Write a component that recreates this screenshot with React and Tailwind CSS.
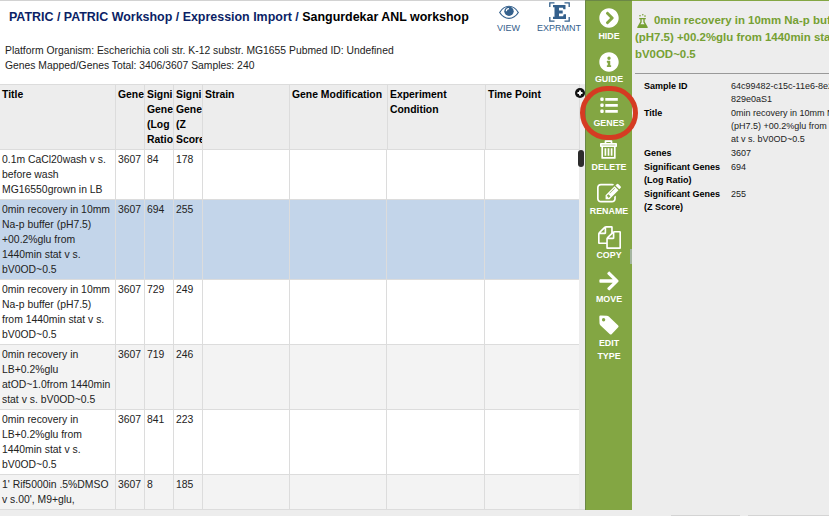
import React from "react";
import { FaChevronCircleRight, FaInfoCircle, FaArrowRight } from "react-icons/fa";

const columns = [
  ["Title", "w-[116px]"],
  ["Gene", "w-[29px]"],
  ["Signi Gene (Log Ratio", "w-[29px]"],
  ["Signi Gene (Z Score", "w-[29px]"],
  ["Strain", "w-[87px]"],
  ["Gene Modification", "w-[98px]"],
  ["Experiment Condition", "w-[98px]"],
  ["Time Point", "flex-1"],
];

const rows = [
  { lines: ["0.1m CaCl20wash v s.", "before wash", "MG16550grown in LB"], values: ["3607", "84", "178"], bg: "bg-white" },
  { lines: ["0min recovery in 10mm", "Na-p buffer (pH7.5)", "+00.2%glu from", "1440min stat v s.", "bV0OD~0.5"], values: ["3607", "694", "255"], bg: "bg-[#c3d5ea]" },
  { lines: ["0min recovery in 10mm", "Na-p buffer (pH7.5)", "from 1440min stat v s.", "bV0OD~0.5"], values: ["3607", "729", "249"], bg: "bg-white" },
  { lines: ["0min recovery in", "LB+0.2%glu", "atOD~1.0from 1440min", "stat v s. bV0OD~0.5"], values: ["3607", "719", "246"], bg: "bg-[#f3f3f3]" },
  { lines: ["0min recovery in", "LB+0.2%glu from", "1440min stat v s.", "bV0OD~0.5"], values: ["3607", "841", "223"], bg: "bg-white" },
  { lines: ["1' Rif5000in .5%DMSO", "v s.00', M9+glu,"], values: ["3607", "8", "185"], bg: "bg-[#f3f3f3]" },
];

const emptyCells = ["w-[87px]", "w-[97px]", "w-[98px]", "flex-1"];

const details = [
  { label: ["Sample ID"], value: ["64c99482-c15c-11e6-8e2a-", "829e0aS1"] },
  { label: ["Title"], value: ["0min recovery in 10mm Na-p", "(pH7.5) +00.2%glu from 1440", "at v s. bV0OD~0.5"] },
  { label: ["Genes"], value: ["3607"] },
  { label: ["Significant Genes", "(Log Ratio)"], value: ["694"] },
  { label: ["Significant Genes", "(Z Score)"], value: ["255"] },
];

function Lines({ items }) {
  return items.map((t) => (
    <div key={t} className="whitespace-nowrap">{t}</div>
  ));
}

function ListIcon() {
  return (
    <svg className="h-[17px] w-[18px]" viewBox="0 0 18 17" fill="currentColor">
      <rect x="0.3" y="0.6" width="3.4" height="3.4" rx="1.2" />
      <rect x="0.3" y="6.6" width="3.4" height="3.4" rx="1.2" />
      <rect x="0.3" y="12.6" width="3.4" height="3.4" rx="1.2" />
      <path d="M5.300 1h12.500v2.800H5.300zM5.300 7h12.500v2.800H5.300zM5.300 13h12.500v2.800H5.300z" />
    </svg>
  );
}

function TrashIcon() {
  return (
    <svg className="h-[19px] w-[17px]" viewBox="0 0 17 19" fill="none" stroke="currentColor" strokeWidth="1.7" strokeLinejoin="round">
      <path d="M5.500 3V1.200h6V3M.8 6.200V3.900h15.400v2.300zM2.200 6.500v11.400h12.600V6.500M5.400 8.300v7.400M8.500 8.300v7.400M11.600 8.300v7.400" />
    </svg>
  );
}

function EditIcon() {
  return (
    <svg className="h-[24px] w-[24px]" viewBox="0 0 1792 1792" fill="currentColor">
      <path d="M888 1184l116-116-152-152-116 116v56h96v96h56zm440-720q-16-16-33 1l-350 350q-17 17-1 33t33-1l350-350q17-17 1-33zm80 594v190q0 119-84.5 203.5t-203.5 84.5h-832q-119 0-203.5-84.5t-84.5-203.5v-832q0-119 84.5-203.5t203.5-84.5h832q63 0 117 25 15 7 18 23 3 17-9 29l-49 49q-14 14-32 8-23-6-45-6h-832q-66 0-113 47t-47 113v832q0 66 47 113t113 47h832q66 0 113-47t47-113v-126q0-13 9-22l64-64q15-15 35-7t20 29zm-96-738l288 288-672 672h-288v-288zm444 132l-92 92-288-288 92-92q28-28 68-28t68 28l152 152q28 28 28 68t-28 68z" />
    </svg>
  );
}

function CopyIcon() {
  return (
    <svg className="h-[23px] w-[23px]" viewBox="0 0 1792 1792" fill="currentColor">
      <path d="M1696 384q40 0 68 28t28 68v1216q0 40-28 68t-68 28h-960q-40 0-68-28t-28-68v-288h-544q-40 0-68-28t-28-68v-672q0-40 20-88t48-76l408-408q28-28 76-48t88-20h416q40 0 68 28t28 68v328q68-40 128-40h416zm-544 213l-299 299h299v-299zm-640-384l-299 299h299v-299zm196 647l316-316v-416h-384v416q0 40-28 68t-68 28h-416v640h512v-256q0-40 20-88t48-76zm956 804v-1152h-384v416q0 40-28 68t-68 28h-416v640h896z" />
    </svg>
  );
}

function TagIcon() {
  return (
    <svg className="h-[20px] w-[20px]" viewBox="0 0 20 20" fill="currentColor" fillRule="evenodd">
      <path d="M1.600.4L7.800.8Q9 .9 9.800 1.600L19.200 10.600Q20 11.500 19.200 12.300L12.600 19.200Q11.800 20 10.900 19.200L1.300 10.200Q.6 9.400.5 8.300L.3 1.700Q.3.4 1.600.4zM4.600 3a1.700 1.700 0 1 0 0 3.400 1.700 1.700 0 0 0 0-3.400z" />
    </svg>
  );
}

function EyeIcon() {
  return (
    <svg className="h-[15px] w-[20px]" viewBox="0 0 20 15" fill="none" stroke="currentColor">
      <path d="M.7 7.500C5.500-.8 14.500-.8 19.300 7.500 14.500 15.200 5.500 15.200.7 7.500z" strokeWidth="1.2" />
      <circle cx="10" cy="6.300" r="4.700" fill="currentColor" stroke="none" />
      <path d="M7.300 6.200A2.700 2.700 0 0 1 10 3.600" stroke="white" strokeWidth="1.1" />
    </svg>
  );
}

function ExperimentIcon() {
  return (
    <svg className="h-[20px] w-[21px]" viewBox="0 0 21 20" fill="none" stroke="currentColor">
      <path d="M5.500.8H.8v4.200M15.500.8h4.700v4.200M.8 15v4.200h4.700M20.200 15v4.200h-4.700" strokeWidth="1.3" />
      <path d="M4 3h12.500v4.300h-2.100l-.5-1.500H10v2.700h3.700v2.900H10v2.800h4.100l.6-1.900h2.300V17H4v-2.300h1.500V5.300H4z" fill="currentColor" stroke="none" />
    </svg>
  );
}

function FlaskIcon() {
  return (
    <svg className="h-[14px] w-[11px] shrink-0" viewBox="0 0 11 14" fill="currentColor">
      <path d="M2.200 4h6.600v1.300H7.700v2.500l3 5.100c.2.600 0 1-.7 1H1c-.7 0-.9-.4-.7-1l3-5.100V5.300H2.200zM4.700 5.300v2.900L3.400 10.300h4.200L6.300 8.200V5.300z" fillRule="evenodd" />
      <circle cx="3" cy="1.700" r=".8" />
      <circle cx="5.800" cy=".8" r=".8" />
      <circle cx="8" cy="2.100" r=".8" />
    </svg>
  );
}

const actions = [
  { label: ["HIDE"], icon: <FaChevronCircleRight className="h-[20px] w-[20px]" /> },
  { label: ["GUIDE"], icon: <FaInfoCircle className="h-[20px] w-[20px]" /> },
  { label: ["GENES"], icon: <ListIcon />, ring: true },
  { label: ["DELETE"], icon: <TrashIcon /> },
  { label: ["RENAME"], icon: <EditIcon /> },
  { label: ["COPY"], icon: <CopyIcon /> },
  { label: ["MOVE"], icon: <FaArrowRight className="h-[22px] w-[20px]" /> },
  { label: ["EDIT", "TYPE"], icon: <TagIcon /> },
];

export default function App() {
  return (
    <div className="flex h-[516px] w-[829px] flex-col overflow-hidden bg-[#ededed] font-['Liberation_Sans',Arial,sans-serif] text-[#222]">
      <div className="flex h-[510px]">
        <main className="flex w-[585px] flex-col border-t border-[#d2d2d2] bg-white">
          <header className="flex h-[83px]">
            <div className="flex-1 whitespace-nowrap">
              <h1 className="pt-[7px] pl-[9px] text-[12.45px] leading-[18px] font-bold text-black">
                <span className="text-[#0b1f66]">PATRIC / PATRIC Workshop / Expression Import / </span>
                Sangurdekar ANL workshop
              </h1>
              <div className="pt-[17px] pl-[5px] text-[10.35px] leading-[15px]">
                <p>Platform Organism: Escherichia coli str. K-12 substr. MG1655 Pubmed ID: Undefined</p>
                <p>Genes Mapped/Genes Total: 3406/3607 Samples: 240</p>
              </div>
            </div>
            <div className="flex pr-px text-[9px] leading-[10px] text-[#34608c]">
              <div className="flex w-[51px] flex-col items-center pt-[4px]">
                <EyeIcon />
                <span className="mt-[3px]">VIEW</span>
              </div>
              <div className="flex w-[50px] flex-col items-center pt-px">
                <ExperimentIcon />
                <span className="mt-px">EXPRMNT</span>
              </div>
            </div>
          </header>

          <section className="flex flex-1 flex-col bg-[#ededed] text-[10.4px] leading-[15px]">
            <div className="relative flex h-[66px] w-[580px] border-y border-[#dcdcdc] font-bold text-black">
              {columns.map(([label, width]) => (
                <div key={label} className={`${width} shrink-0 overflow-hidden border-r border-[#dcdcdc] pt-[2px] pl-[2px]`}>
                  {label}
                </div>
              ))}
              <svg className="absolute top-[3px] right-[-5px] h-[10px] w-[10px]" viewBox="0 0 10 10">
                <circle cx="5" cy="5" r="5" fill="#111" />
                <path d="M5 2.500v5M2.500 5h5" stroke="white" strokeWidth="1.900" />
              </svg>
            </div>
            <div className="relative border-b border-[#dcdcdc]">
              {rows.map((row, i) => (
                <div key={i} className={`flex w-[579px] border-[#dcdcdc] ${i < rows.length - 1 ? "border-b" : ""} ${row.bg}`}>
                  <div className="w-[116px] border-r border-[#dcdcdc] pt-[2px] pb-[2px] pl-[2px]">
                    <Lines items={row.lines} />
                  </div>
                  {row.values.map((v) => (
                    <div key={v} className="w-[29px] border-r border-[#dcdcdc] pt-[2px] pl-[2px]">{v}</div>
                  ))}
                  {emptyCells.map((w, j) => (
                    <div key={j} className={`${w} ${j < 3 ? "border-r" : ""} border-[#dcdcdc]`} />
                  ))}
                </div>
              ))}
              <div className="absolute top-0 right-[1px] h-[17px] w-[6px] rounded-[3px] bg-[#2c2c2c]" />
            </div>
          </section>
        </main>

        <nav className="relative flex w-[47px] flex-col items-center border-t border-l border-[#6b8746] bg-[#83a643] text-[8.9px] leading-[13px] font-bold text-white">
          {actions.map((a, i) => (
            <div key={i} className="relative flex h-[43.9px] shrink-0 flex-col items-center">
              <div className="flex h-[28.6px] shrink-0 items-center pt-[5.4px]">{a.icon}</div>
              <Lines items={a.label} />
              {a.ring && (
                <div className="absolute top-[-3px] left-1/2 h-[54px] w-[58px] -translate-x-1/2 rounded-full border-[5px] border-[#d53b22]" />
              )}
            </div>
          ))}
          <div className="absolute top-[248px] right-0 h-[15px] w-[2px] bg-[#a4b5a0]" />
        </nav>

        <aside className="w-[197px] overflow-hidden border-t border-[#83a643] pl-[3px] whitespace-nowrap">
          <h2 className="pt-[11px] text-[11.45px] leading-[17px] font-bold text-[#76a033]">
            <div className="flex items-center pl-[2px]">
              <FlaskIcon />
              <span className="pl-[6px]">0min recovery in 10mm Na-p buffer</span>
            </div>
            <div>(pH7.5) +00.2%glu from 1440min stat v s.</div>
            <div>bV0OD~0.5</div>
          </h2>
          <div className="mt-[10px] border-t border-[#999]" />
          <dl className="flex flex-col gap-px pt-[6px] pl-[9px] text-[9px] leading-[13px]">
            {details.map((d) => (
              <div key={d.label.join()} className="flex">
                <dt className="w-[87px] shrink-0 font-bold text-black"><Lines items={d.label} /></dt>
                <dd><Lines items={d.value} /></dd>
              </div>
            ))}
          </dl>
        </aside>
      </div>
      <div className="flex h-[6px] items-end">
        <div className="ml-[671px] h-px w-[69px] bg-[#d4d4d4]" />
        <div className="ml-[8px] h-px flex-1 bg-[#d4d4d4]" />
      </div>
    </div>
  );
}
